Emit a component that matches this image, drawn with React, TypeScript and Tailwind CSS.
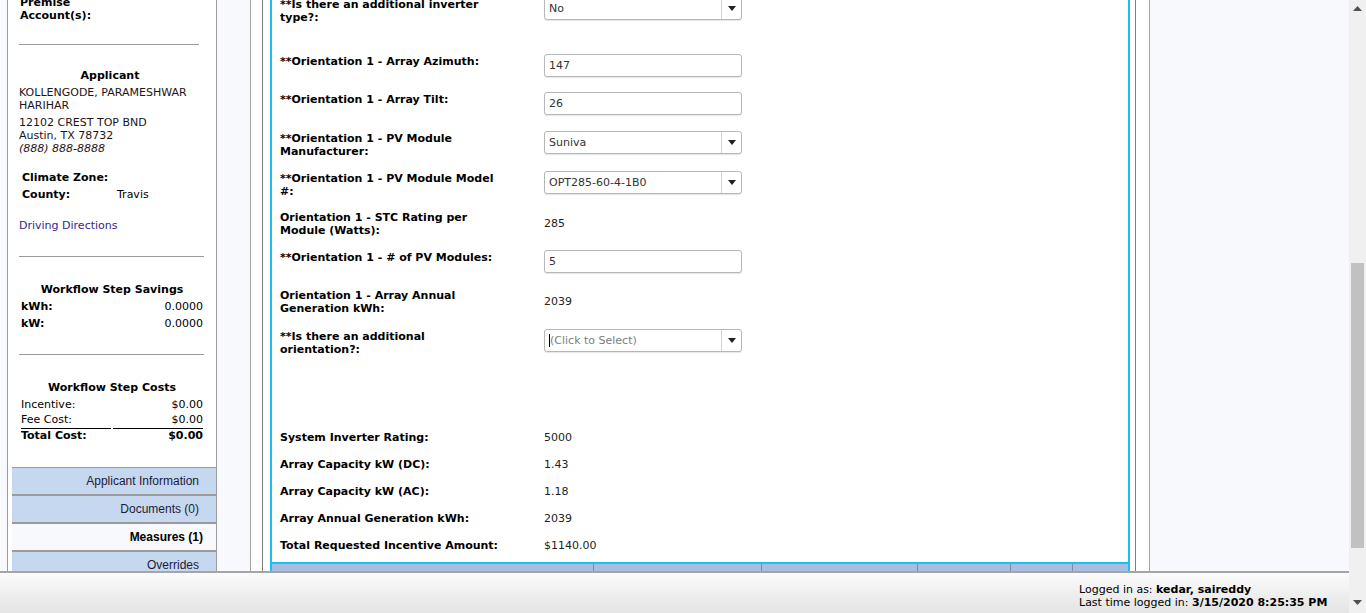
import React from 'react';

// --- small drawings ---
const DownArrow = () => (
  <svg width="8" height="5" viewBox="0 0 8 5">
    <path d="M0 0h8L4 5z" fill="#222" />
  </svg>
);

const TextBox = ({ value }: { value: string }) => (
  <div className="flex h-[23px] w-[198px] items-center rounded-[3px] border border-[#b7b7b7] bg-white pl-[4px] text-[#333] shadow-[0_1px_1px_rgba(0,0,0,0.1)]">
    {value}
  </div>
);

const SelectBox = ({ value, placeholder }: { value: string; placeholder?: boolean }) => (
  <div className="flex h-[23px] w-[198px] items-center rounded-[3px] border border-[#b7b7b7] bg-white shadow-[0_1px_1px_rgba(0,0,0,0.1)]">
    <div className="flex flex-1 items-center pl-[4px]">
      {placeholder && <span className="h-[13px] w-px bg-black" />}
      <span className={placeholder ? 'text-[#7d7d7d]' : 'text-[#333]'}>{value}</span>
    </div>
    <div className="flex h-full w-[20px] items-center justify-center border-l border-[#d2d2d2]">
      <DownArrow />
    </div>
  </div>
);

// --- form data ---
type FormRow = {
  label: string[];
  kind: 'input' | 'select' | 'static' | 'placeholder';
  value: string;
  mt: string;
};

const formRows: FormRow[] = [
  { label: ['**Is there an additional inverter', 'type?:'], kind: 'select', value: 'No', mt: 'mt-0' },
  { label: ['**Orientation 1 - Array Azimuth:'], kind: 'input', value: '147', mt: 'mt-[31px]' },
  { label: ['**Orientation 1 - Array Tilt:'], kind: 'input', value: '26', mt: 'mt-[15px]' },
  { label: ['**Orientation 1 - PV Module', 'Manufacturer:'], kind: 'select', value: 'Suniva', mt: 'mt-[16px]' },
  { label: ['**Orientation 1 - PV Module Model', '#:'], kind: 'select', value: 'OPT285-60-4-1B0', mt: 'mt-[14px]' },
  { label: ['Orientation 1 - STC Rating per', 'Module (Watts):'], kind: 'static', value: '285', mt: 'mt-[13px]' },
  { label: ['**Orientation 1 - # of PV Modules:'], kind: 'input', value: '5', mt: 'mt-[14px]' },
  { label: ['Orientation 1 - Array Annual', 'Generation kWh:'], kind: 'static', value: '2039', mt: 'mt-[15px]' },
  { label: ['**Is there an additional', 'orientation?:'], kind: 'placeholder', value: '(Click to Select)', mt: 'mt-[15px]' },
];

const totals = [
  ['System Inverter Rating:', '5000'],
  ['Array Capacity kW (DC):', '1.43'],
  ['Array Capacity kW (AC):', '1.18'],
  ['Array Annual Generation kWh:', '2039'],
  ['Total Requested Incentive Amount:', '$1140.00'],
];

// --- left column ---
const Sidebar = () => (
  <div className="ml-[7px] flex w-[210px] shrink-0 flex-col border-x border-[#9c9c9c] bg-white pt-[20px]">
    <div className="pl-[12px] font-bold">
      <div>Premise</div>
      <div>Account(s):</div>
    </div>
    <div className="mx-[11px] mt-[22px] h-px w-[180px] bg-[#9a9a9a]" />

    <div className="mt-[24px] pr-[4px] text-center font-bold">Applicant</div>
    <div className="mt-[4px] pl-[11px] text-[#1c1420]">
      <div>KOLLENGODE, PARAMESHWAR</div>
      <div>HARIHAR</div>
    </div>
    <div className="mt-[4px] pl-[11px] text-[#1c1420]">
      <div>12102 CREST TOP BND</div>
      <div>Austin, TX 78732</div>
      <div className="italic">(888) 888-8888</div>
    </div>

    <div className="mt-[16px] grid grid-cols-[95px_1fr] gap-y-[4px] pl-[14px]">
      <span className="font-bold">Climate Zone:</span>
      <span />
      <span className="font-bold">County:</span>
      <span>Travis</span>
    </div>
    <div className="mt-[18px] pl-[11px] text-[#33288a]">Driving Directions</div>

    <div className="mx-[11px] mt-[24px] h-px w-[185px] bg-[#9a9a9a]" />
    <div className="mt-[26px] text-center font-bold">Workflow Step Savings</div>
    <div className="mt-[4px] flex flex-col gap-[4px] pl-[13px] pr-[13px]">
      <div className="flex justify-between">
        <span className="font-bold">kWh:</span>
        <span>0.0000</span>
      </div>
      <div className="flex justify-between">
        <span className="font-bold">kW:</span>
        <span>0.0000</span>
      </div>
    </div>

    <div className="mx-[11px] mt-[24px] h-px w-[185px] bg-[#9a9a9a]" />
    <div className="mt-[26px] text-center font-bold">Workflow Step Costs</div>
    <div className="mt-[4px] pl-[13px] pr-[13px]">
      <div className="flex justify-between">
        <span>Incentive:</span>
        <span>$0.00</span>
      </div>
      <div className="mt-[2px] flex justify-between">
        <span>Fee Cost:</span>
        <span>$0.00</span>
      </div>
      <div className="mt-[2px] flex gap-[2px]">
        <div className="h-px w-[90px] bg-black" />
        <div className="h-px flex-1 bg-black" />
      </div>
      <div className="flex justify-between font-bold">
        <span>Total Cost:</span>
        <span>$0.00</span>
      </div>
    </div>

    <div className="mt-[25px] ml-[4px] font-['Liberation_Sans',sans-serif] text-[12px] text-[#1b1b3a]">
      <div className="flex h-[29px] items-center justify-end border-t border-b-2 border-[#9b9b9b] bg-[#c6d8ef] pr-[17px]">
        Applicant Information
      </div>
      <div className="flex h-[28px] items-center justify-end border-b-2 border-[#9b9b9b] bg-[#c6d8ef] pt-px pr-[17px]">
        Documents (0)
      </div>
      <div className="flex h-[28px] items-center justify-end border-b-2 border-[#9b9b9b] bg-[#f7f9fd] pt-px pr-[13px] font-bold text-black">
        Measures (1)
      </div>
      <div className="flex h-[28px] items-center justify-end border-b-2 border-[#9b9b9b] bg-[#c6d8ef] pt-px pr-[17px]">
        Overrides
      </div>
    </div>
  </div>
);

// --- centre panel ---
const FormPanel = () => (
  <div className="w-[900px] shrink-0 border-x border-[#a3a3a3] bg-white pl-[11px] pr-[13px]">
    <div className="h-full border-x border-[#7d7d7d] pl-[7px] pr-[5px]">
      <div className="border-x-2 border-[#1cc0ef]">
        <div className="border-b-2 border-[#1cc0ef] pl-[8px] pt-[21px] pb-[10px] text-black">
          {formRows.map((r) => (
            <div key={r.label.join(' ')} className={`${r.mt} grid grid-cols-[264px_198px] items-start`}>
              <div className="mt-px -mb-px font-bold whitespace-nowrap">
                {r.label.map((l) => (
                  <div key={l}>{l}</div>
                ))}
              </div>
              {r.kind === 'input' && <TextBox value={r.value} />}
              {r.kind === 'select' && <SelectBox value={r.value} />}
              {r.kind === 'placeholder' && <SelectBox value={r.value} placeholder />}
              {r.kind === 'static' && <div className="self-center text-[#222]">{r.value}</div>}
            </div>
          ))}

          <div className="mt-[76px] flex flex-col gap-[14px]">
            {totals.map(([k, v]) => (
              <div key={k} className="grid grid-cols-[264px_1fr]">
                <span className="font-bold">{k}</span>
                <span className="text-[#222]">{v}</span>
              </div>
            ))}
          </div>
        </div>
        <div className="flex h-[26px] bg-[#a7bee2]">
          <div className="w-[321px]" />
          <div className="w-[168px] border-l border-[#7f8ca3]" />
          <div className="w-[156px] border-l border-[#7f8ca3]" />
          <div className="w-[93px] border-l border-[#7f8ca3]" />
          <div className="w-[62px] border-l border-[#7f8ca3]" />
          <div className="flex-1 border-l border-[#7f8ca3]" />
        </div>
      </div>
    </div>
  </div>
);

const Scrollbar = () => (
  <div className="flex h-[613px] w-[17px] shrink-0 flex-col items-center bg-[#f0f0f0]">
    <div className="mt-[6px]">
      <svg width="9" height="5" viewBox="0 0 9 5">
        <path d="M0 5h9L4.5 0z" fill="#505050" />
      </svg>
    </div>
    <div className="mt-[252px] h-[285px] w-[13px] bg-[#c1c1c1]" />
    <div className="mt-auto mb-[8px]">
      <svg width="9" height="5" viewBox="0 0 9 5">
        <path d="M0 0h9L4.5 5z" fill="#505050" />
      </svg>
    </div>
  </div>
);

export default function App() {
  return (
    <div className="flex h-[613px] w-[1366px] overflow-hidden bg-[#f7f9fd] font-['DejaVu_Sans',sans-serif] text-[11px] leading-[13px] text-black">
      <div className="flex w-[1349px] shrink-0 flex-col">
        <div className="h-[571px] overflow-hidden">
          <div className="-mt-[24px] flex h-[650px]">
            <Sidebar />
            <div className="w-[33px] shrink-0" />
            <FormPanel />
          </div>
        </div>
        <footer className="flex h-[42px] flex-col border-t-2 border-[#a5a5a5] bg-gradient-to-b from-[#fbfbfb] to-[#e4e4e4] pl-[1079px] pt-[10px]">
          <div>
            Logged in as: <span className="font-bold">kedar, saireddy</span>
          </div>
          <div>
            Last time logged in: <span className="font-bold">3/15/2020 8:25:35 PM</span>
          </div>
        </footer>
      </div>
      <Scrollbar />
    </div>
  );
}
